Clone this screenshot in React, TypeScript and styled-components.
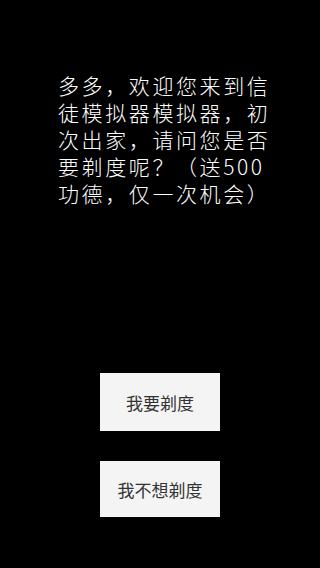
import React from 'react';
import styled, { createGlobalStyle } from 'styled-components';

const GlobalStyle = createGlobalStyle`
  html, body {
    margin: 0;
    padding: 0;
    background-color: #000;
  }
  * {
    box-sizing: border-box;
  }
`;

const Screen = styled.div`
  display: flex;
  flex-direction: column;
  justify-content: space-between;
  align-items: center;
  height: 568px;
  width: 320px;
  padding: 72px 0 51px;
  background-color: #000;
  font-family: 'Noto Sans CJK SC', 'Noto Sans', sans-serif;
`;

const Prompt = styled.p`
  align-self: flex-start;
  margin: 0 0 0 58px;
  width: 216px;
  color: #fff;
  font-size: 21px;
  font-weight: 300;
  line-height: 27px;
  letter-spacing: 2.6px;
  text-align: left;
`;

const Choices = styled.div`
  display: flex;
  flex-direction: column;
  align-items: center;
  gap: 30px;
`;

const ChoiceButton = styled.button<{ $height: number }>`
  display: flex;
  align-items: center;
  justify-content: center;
  width: 120px;
  height: ${(p) => p.$height}px;
  padding: 0;
  border: none;
  border-radius: 0;
  background-color: #f4f4f4;
  color: #333;
  font-family: 'Noto Sans CJK SC', 'Noto Sans', sans-serif;
  font-size: 17px;
  font-weight: 400;
  cursor: pointer;
`;

export default function App(): JSX.Element {
  return (
    <>
      <GlobalStyle />
      <Screen>
        <Prompt>多多，欢迎您来到信徒模拟器模拟器，初次出家，请问您是否要剃度呢？（送500功德，仅一次机会）</Prompt>
        <Choices>
          <ChoiceButton $height={58}>我要剃度</ChoiceButton>
          <ChoiceButton $height={56}>我不想剃度</ChoiceButton>
        </Choices>
      </Screen>
    </>
  );
}
